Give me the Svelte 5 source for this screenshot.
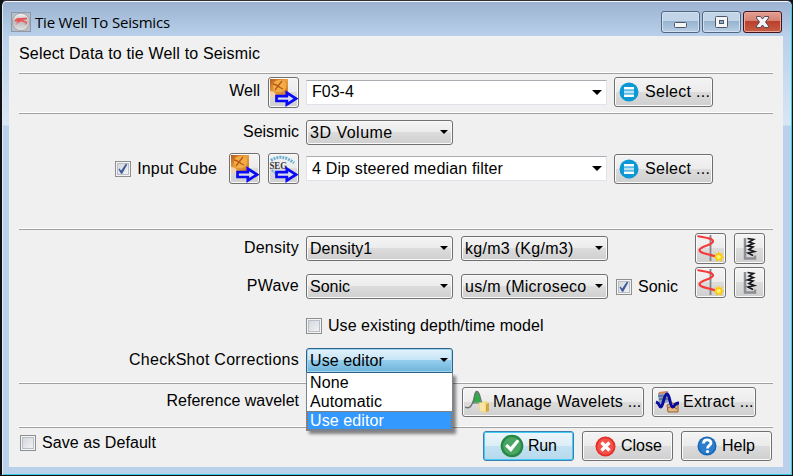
<script>
  let inputCube = $state(true);
  let sonic = $state(true);
  let existing = $state(false);
  let saveDefault = $state(false);
  const options = ['None', 'Automatic', 'Use editor'];
  let selected = $state('Use editor');
</script>

{#snippet arrow()}
  <path d="M7.500 18.200H17.800V14.800L27 20.600 17.800 26.500V23H7.500Z" fill="#d8dcec" stroke="#0a0af5" stroke-width="2.700" />
{/snippet}

{#snippet wellIcon()}
  <button class="tool" aria-label="Import">
    <svg width="29" height="29" viewBox="0 0 29 29">
      <defs>
        <linearGradient id="amber" x1="0" y1="0" x2="1" y2="1">
          <stop offset="0" stop-color="#b5581b" /><stop offset=".45" stop-color="#e9a141" /><stop offset="1" stop-color="#c8702b" />
        </linearGradient>
      </defs>
      <path d="M1 1H19V19H3L1 16Z" fill="url(#amber)" />
      <path d="M4 8C4 4 7 2 11 2S17 4 17 8 14 14 10 14 4 12 4 8Z" fill="#f2ae45" />
      <path d="M4 6C7 6 9 8 11 9.500L14 11M13 3L9 8 6 12" stroke="#b9561a" stroke-width="1.300" fill="none" />
      <path d="M1 13L5 14 7 17V20H3L1 18Z" fill="#f3d3ae" />
      {@render arrow()}
    </svg>
  </button>
{/snippet}

{#snippet segIcon()}
  <button class="tool" aria-label="Import SEG">
    <svg width="29" height="29" viewBox="0 0 29 29">
      <path d="M2 6.500Q13-1 25 9" stroke="#6bb0d4" stroke-width="3" stroke-dasharray="2 1" fill="none" />
      <path d="M3 16Q6 20 10 20" stroke="#6bb0d4" stroke-width="2" stroke-dasharray="2 1" fill="none" />
      <text x="0.5" y="14.5" font-family="Liberation Serif, serif" font-weight="bold" font-size="10" textLength="17.5" lengthAdjust="spacingAndGlyphs" fill="#34343b">SEG</text>
      {@render arrow()}
    </svg>
  </button>
{/snippet}

{#snippet logButtons()}
  <div class="logs">
    <button class="tool" aria-label="Create log">
      <svg width="29" height="29" viewBox="0 0 29 29">
        <path d="M14.500 1V27" stroke="#858585" stroke-width="1.800" />
        <path d="M1.500 2C8 3.500 17 4 17 7.500C17 11 3.500 12.500 3.500 16C3.500 19 10 20 19 22" stroke="#f43a3a" stroke-width="2.200" fill="none" />
        <path d="M22.500 17L23.900 20.200 27 18.600 25.900 22 28.500 23.500 25.500 24.700 26 28 23 26 20 28 20.300 24.700 17 23.500 20 22 18.600 18.600 21.500 20Z" fill="#ffc80a" />
        <circle cx="22.700" cy="23" r="2.100" fill="#fff56a" />
      </svg>
    </button>
    <button class="tool" aria-label="View log">
      <svg width="29" height="29" viewBox="0 0 29 29">
        <path d="M10 4V24.500H20V21.500" stroke="#8b8f94" stroke-width="2.500" fill="none" />
        <path d="M12.500 4.500L18.500 5.500 14 8 18.500 9.500 12.500 12 18 13 14 15.500 19.500 17.500 13 19 18 21.500" stroke="#15171a" stroke-width="1.600" fill="none" />
      </svg>
    </button>
  </div>
{/snippet}

{#snippet selectButton()}
  <button class="btn select">
    <svg width="20" height="20" viewBox="0 0 20 20">
      <circle cx="10" cy="10" r="9.500" fill="#0b98d5" />
      <path d="M5 6.300H15M5 10H15M5 13.700H15" stroke="#fff" stroke-width="2.400" />
      <path d="M5 10H15" stroke="#b6e2f6" stroke-width="2.400" />
    </svg>
    <span>Select ...</span>
  </button>
{/snippet}

{#snippet check(on)}
  <span class="box">
    {#if on}
      <svg width="14" height="14" viewBox="0 0 14 14"><path d="M3 6.200L5.200 8.500 9.800 1.800 11.300 2.600 6.200 11.800H5L2.600 7.500Z" fill="#405a9d" /></svg>
    {/if}
  </span>
{/snippet}

<div class="window">
  <header class="title">
    <svg width="20" height="20" viewBox="0 0 20 20">
      <defs><linearGradient id="metal" x2="0" y2="1"><stop stop-color="#f5f5f5" /><stop offset=".5" stop-color="#bcbcbc" /><stop offset="1" stop-color="#e4e4e4" /></linearGradient></defs>
      <rect x=".5" y=".5" width="19" height="19" fill="#b7bfca" stroke="#8d99a8" />
      <circle cx="10" cy="10" r="8.800" fill="url(#metal)" stroke="#a4a6aa" />
      <path d="M3 9Q6 5 9 6L16 5.500V7.500L12 8 16 10V12L11 9.500 8 10 7 12 6 9.500Z" fill="#e8585a" />
      <path d="M6 10L5 13M13 10L15 13" stroke="#eb8a8a" />
    </svg>
    <h1>Tie Well To Seismics</h1>
    <div class="controls">
      <button class="ctl" aria-label="Minimize"><svg width="36" height="19"><rect x="12.500" y="9.500" width="12" height="5" rx="1" fill="#f5f5f5" stroke="#4c566a" /></svg></button>
      <button class="ctl" aria-label="Maximize"><svg width="36" height="19"><rect x="12.500" y="3.500" width="12" height="11" rx="1" fill="#f5f5f5" stroke="#4c566a" /><rect x="16.500" y="7.500" width="4" height="3" fill="#8faccb" stroke="#4c566a" /></svg></button>
      <button class="ctl close" aria-label="Close window"><svg width="36" height="19"><path d="M12.500 3.500H16.500L18.500 6 20.500 3.500H24.500V5L21.500 9 24.500 13V14.500H20.500L18.500 12 16.500 14.500H12.500V13L15.500 9 12.500 5Z" fill="#f3f3f3" stroke="#55495a" /></svg></button>
    </div>
  </header>

  <main>
    <p class="heading">Select Data to tie Well to Seismic</p>
    <hr />
    <div class="row well">
      <div class="lead"><span>Well</span>{@render wellIcon()}</div>
      <div class="edit"><span>F03-4</span><i></i></div>
      {@render selectButton()}
    </div>
    <hr />
    <div class="row seismic">
      <div class="lead"><span>Seismic</span></div>
      <button class="combo volume"><span>3D Volume</span><i></i></button>
    </div>
    <div class="row cube">
      <div class="lead">
        <label><input type="checkbox" bind:checked={inputCube} />{@render check(inputCube)}<span>Input Cube</span></label>
        {@render wellIcon()}
        {@render segIcon()}
      </div>
      <div class="edit"><span>4 Dip steered median filter</span><i></i></div>
      {@render selectButton()}
    </div>
    <hr />
    <div class="row density">
      <div class="lead"><span>Density</span></div>
      <button class="combo"><span>Density1</span><i></i></button>
      <button class="combo unit"><span>kg/m3 (Kg/m3)</span><i></i></button>
      {@render logButtons()}
    </div>
    <div class="row pwave">
      <div class="lead"><span>PWave</span></div>
      <button class="combo"><span>Sonic</span><i></i></button>
      <button class="combo unit"><span>us/m (Microseco</span><i></i></button>
      <label><input type="checkbox" bind:checked={sonic} />{@render check(sonic)}<span>Sonic</span></label>
      {@render logButtons()}
    </div>
    <div class="row existing">
      <div class="lead"></div>
      <label><input type="checkbox" bind:checked={existing} />{@render check(existing)}<span>Use existing depth/time model</span></label>
    </div>
    <div class="row checkshot">
      <div class="lead"><span>CheckShot Corrections</span></div>
      <div class="anchor">
        <button class="combo open"><span>{selected}</span><i></i></button>
        <ul>
          {#each options as option}
            <li class:active={option === selected}><button onclick={() => (selected = option)}>{option}</button></li>
          {/each}
        </ul>
      </div>
    </div>
    <hr />
    <div class="row reference">
      <div class="lead"><span>Reference wavelet</span></div>
      <button class="btn manage">
        <svg width="25" height="24" viewBox="0 0 25 24">
          <path d="M7 13C9 10 9 2 12 2S15 10 16 12Z" fill="#2fab48" />
          <path d="M0 17C4 19 6 17 8 12S9 1.500 12 1.500 15 10 17 13" stroke="#68716c" stroke-width="1.300" fill="none" />
          <path d="M7 13H16" stroke="#68716c" />
          <path d="M14 13L21 11 24 13V21L18 23 14 20Z" fill="#f4d982" /><path d="M21 14L24 13V21L21 22Z" fill="#d3a73c" /><path d="M15 13H20V21H15Z" fill="#f9e6a6" />
        </svg>
        <span>Manage Wavelets ...</span>
      </button>
      <button class="btn extract">
        <svg width="25" height="24" viewBox="0 0 25 24">
          <path d="M3 3L13 1 15 12 4 14Z" fill="#8ea2be" /><path d="M4 3L12 2" stroke="#d98a58" stroke-width="2" /><path d="M3 6H14M4 9H14" stroke="#31507a" />
          <path d="M12 15L17 13 23 14V22L13 22Z" fill="#e5b780" stroke="#926039" /><path d="M13 18L17 16 22 19" stroke="#a55b35" fill="none" />
          <path d="M1 12C5 13 4 17 6 17S9 4 12 4 15 17 17.500 17 19 13 24 13" stroke="#0a0a9c" stroke-width="3" fill="none" />
        </svg>
        <span>Extract ...</span>
      </button>
    </div>
    <hr />
    <footer class="row foot">
      <label><input type="checkbox" bind:checked={saveDefault} />{@render check(saveDefault)}<span>Save as Default</span></label>
      <div class="actions">
        <button class="btn run">
          <svg width="24" height="24" viewBox="0 0 24 24"><circle cx="12" cy="12" r="11.300" fill="#258744" /><circle cx="12" cy="12" r="9" fill="#4ba564" /><path d="M5 12L7.500 10 10.500 13 17 5.500 19.500 7 11 18Z" fill="#fff" /></svg>
          <span>Run</span>
        </button>
        <button class="btn cancel">
          <svg width="21" height="21" viewBox="0 0 21 21"><circle cx="10.500" cy="10.500" r="10" fill="#e62d28" /><circle cx="10.500" cy="10.500" r="8.200" fill="#f2524a" /><path d="M6.500 6.500L14.500 14.500M14.500 6.500L6.500 14.500" stroke="#fff" stroke-width="3.200" /></svg>
          <span>Close</span>
        </button>
        <button class="btn help">
          <svg width="20" height="20" viewBox="0 0 20 20"><circle cx="10" cy="10" r="9.500" fill="#1765b4" /><circle cx="10" cy="10" r="8" fill="#2c7dcc" /><path d="M6.500 7.500C6.500 2.500 14 3 14 7 14 9.500 10.500 9.500 10.500 12.500" stroke="#fff" stroke-width="2.800" fill="none" /><circle cx="10.500" cy="15.500" r="1.600" fill="#fff" /></svg>
          <span>Help</span>
        </button>
      </div>
    </footer>
  </main>
</div>

<style>
  :global(body) { margin: 0; background: #10141a; overflow: hidden; }
  * { box-sizing: border-box; }
  .window {
    width: 793px; height: 476px; display: flex; flex-direction: column;
    padding: 2px 8px 7px 7px;
    border: 1px solid #111; border-left-width: 2px; border-top-color: #322f36; border-radius: 6px 6px 0 0;
    background: linear-gradient(#9ab2d0 0, #b9d1ea 36px, #d9e6f4 124px, #b9d1ea 125px);
    box-shadow: inset 0 1px #f4f8fc, inset 1px 0 #dceafa, inset -1px 0 #35cce0, inset 0 -1px #35cce0;
    font: 16px/20px "Liberation Sans", Arial, sans-serif; color: #000;
  }
  .title { height: 33px; flex: none; display: flex; align-items: flex-start; padding-left: 2px; }
  .title > svg { margin-top: 9px; }
  h1 { margin: 9px 0 0 4px; font: 15px/20px "Open Sans", "Noto Sans", sans-serif; letter-spacing: -.2px; white-space: nowrap; }
  .controls { display: flex; gap: 2px; margin: 8px 2px 0 auto; }
  .ctl { width: 39px; height: 22px; padding: 0; border: 1px solid #53667f; border-radius: 3px; background: linear-gradient(#c2d4e8 0 45%, #98b2ce 46%, #b7cde4); box-shadow: inset 0 0 0 1px #d2e1f1; }
  .ctl svg { display: block; }
  .close { border-color: #46131b; background: linear-gradient(#e2a092 0, #d58172 45%, #b93f2c 46%, #c85d43); box-shadow: inset 0 0 0 1px #e9a89b; }
  main { width: 774px; height: 431px; flex: none; background: #f0f0f0; padding: 0 10px; }
  .heading { margin: 0; height: 36px; padding-top: 8px; letter-spacing: .17px; white-space: nowrap; }
  hr { width: 754px; height: 2px; margin: 0; border: 0; border-top: 1px solid #fff; background: #a0a0a0; }
  .row { display: flex; align-items: center; gap: 8px; white-space: nowrap; }
  .lead { width: 280px; display: flex; align-items: center; justify-content: flex-end; gap: 8px; margin-right: -1px; flex: none; }
  .lead > span { position: relative; top: -1px; }
  .well { height: 36px; margin-bottom: 2px; }
  .seismic { height: 37px; }
  .cube { height: 35px; margin-bottom: 42px; }
  .cube .lead label { margin-right: 4px; letter-spacing: .15px; }
  .density { height: 37px; }
  .density .lead, .pwave .lead { letter-spacing: .25px; }
  .pwave { height: 39px; }
  .existing { height: 40px; }
  .existing label { letter-spacing: .04px; }
  .checkshot { height: 29px; margin-bottom: 7px; }
  .checkshot .lead { letter-spacing: .26px; }
  .reference { height: 36px; margin-bottom: 6px; }
  .foot { height: 36px; }
  button { font: inherit; color: inherit; letter-spacing: inherit; white-space: nowrap; }
  .tool, .btn, .combo { border: 1px solid #707070; border-radius: 3px; background: linear-gradient(#f4f4f4 0, #ebebeb 49%, #dcdcdc 50%, #cfcfcf); box-shadow: inset 0 0 0 1px #fafafa; flex: none; }
  .tool { width: 31px; height: 31px; padding: 0; }
  .tool svg { display: block; }
  .btn { height: 30px; display: flex; align-items: center; padding: 0 0 0 4px; }
  .btn svg { flex: none; }
  .combo { width: 147px; height: 25px; display: flex; align-items: center; justify-content: space-between; padding: 0 4px 0 3px; }
  .volume { letter-spacing: .5px; }
  .unit { letter-spacing: .28px; }
  i { width: 0; height: 0; flex: none; border: 4px solid transparent; border-top: 4px solid #000; border-bottom: 0; }
  .combo i { margin-bottom: 1px; }
  .edit { width: 301px; height: 25px; flex: none; display: flex; align-items: center; justify-content: space-between; margin-right: -1px; padding: 0 4px 0 5px; background: #fff; border: 1px solid #e2e3ea; border-top-color: #abadb3; }
  .edit i { border-width: 5px 5px 0; }
  .cube .edit { letter-spacing: .16px; }
  .select { width: 99px; }
  .select span { margin-left: 6px; letter-spacing: .3px; }
  label { display: flex; align-items: center; }
  label span:last-child { margin-left: 6px; }
  input { position: absolute; opacity: 0; width: 0; height: 0; margin: 0; }
  .box { width: 16px; height: 16px; flex: none; border: 1px solid #8e8f8f; background: linear-gradient(135deg, #cfd3d9, #f6f6f6); box-shadow: inset 0 0 0 1px #f4f4f4, inset 0 0 0 2px #b9bfc8; }
  .box svg { display: block; }
  .logs { display: flex; gap: 8px; margin-left: auto; margin-right: 8px; }
  .pwave .logs { align-self: flex-start; }
  .anchor { position: relative; letter-spacing: .1px; }
  .open { border-color: #2c628b; border-radius: 3px 3px 0 0; background: linear-gradient(#e3f2fb 0, #c5e4f6 49%, #94cdec 50%, #6eb4da); box-shadow: inset 0 0 0 1px #9dd3ed; }
  ul { position: absolute; z-index: 2; top: 25px; left: 0; width: 147px; height: 58px; margin: 0; padding: 0; list-style: none; background: #fff; border: 1px solid #7b8492; border-top: 0; box-shadow: 3px 3px 3px #0007; }
  li { height: 19px; }
  li button { width: 145px; height: 19px; display: block; padding: 0 0 0 3px; border: 0; background: none; line-height: 19px; text-align: left; }
  .active button { color: #fff; background: #3399ff; outline: 1px dotted #cc6600; outline-offset: -1px; }
  .manage { width: 182px; margin-left: 156px; padding-left: 2px; }
  .manage span { margin-left: 3px; letter-spacing: .17px; }
  .extract { width: 104px; padding-left: 2px; }
  .extract span { margin-left: 3px; letter-spacing: .3px; }
  .foot { justify-content: space-between; }
  .foot label { margin: -6px 0 0 1px; letter-spacing: .07px; }
  .actions { display: flex; gap: 8px; margin-right: 1px; }
  .actions .btn { width: 91px; }
  .run { border-color: #3c7fb1; background: linear-gradient(#edf5fa 0, #dceef8 49%, #c4e2f2 50%, #b5d9ec); box-shadow: inset 0 0 0 1px #43cdf4; }
  .actions .run { padding-left: 16px; }
  .actions .cancel { padding-left: 12px; }
  .actions .help { padding-left: 15px; }
  .cancel span, .help span { margin-left: 5px; }
  .run span { margin-left: 4px; letter-spacing: -.2px; }
</style>
